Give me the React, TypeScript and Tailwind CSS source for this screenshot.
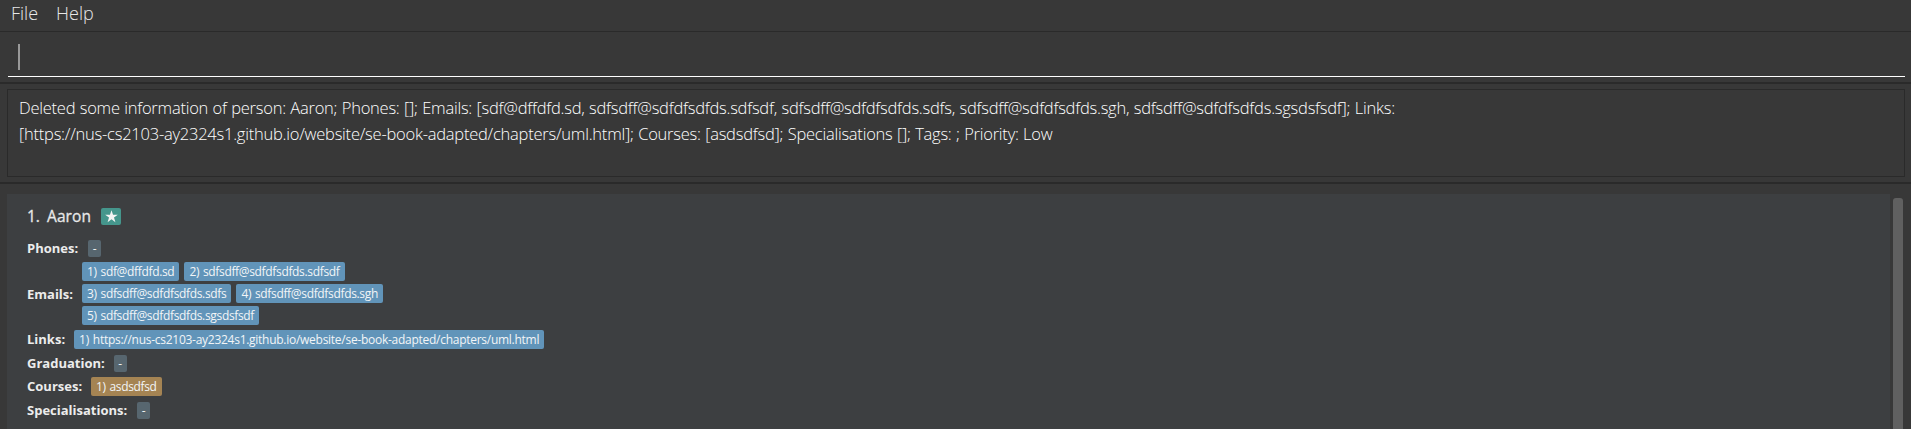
import type { ReactNode } from "react";

const emailRows = [
  ["1) sdf@dffdfd.sd", "2) sdfsdff@sdfdfsdfds.sdfsdf"],
  ["3) sdfsdff@sdfdfsdfds.sdfs", "4) sdfsdff@sdfdfsdfds.sgh"],
  ["5) sdfsdff@sdfdfsdfds.sgsdsfsdf"],
];

function Label({ children }: { children: ReactNode }) {
  return <span className="text-[13px] leading-[17px] font-bold text-[#ececec]">{children}</span>;
}

function Tag({ children, className }: { children: ReactNode; className: string }) {
  return (
    <span
      className={`h-[19px] rounded-xs px-[5px] text-[12px] leading-[19px] [word-spacing:1px] whitespace-nowrap text-[#f2f5f7] ${className}`}
    >
      {children}
    </span>
  );
}

function Empty() {
  return (
    <span className="h-[17px] w-[13px] rounded-xs bg-[#57666f] text-center text-[12px] leading-[17px] text-[#f0f0f0]">
      -
    </span>
  );
}

export default function App() {
  return (
    <div className="flex h-[429px] w-full flex-col overflow-hidden bg-[#383838] font-['Open_Sans',sans-serif]">
      <nav className="flex h-8 shrink-0 gap-[18px] border-b border-[#2a2a2a] pl-[11px] text-[18px] leading-[27px] font-light text-[#e8e8e8]">
        <span>File</span>
        <span>Help</span>
      </nav>

      <div className="h-[50px] shrink-0 pt-3 pr-1.5 pl-2">
        <div className="h-[33px] border-b border-white pl-2.5">
          <div className="h-[26px] w-0.5 bg-[#999999]" />
        </div>
      </div>

      <section className="h-[102px] shrink-0 border-y-2 border-[#2a2a2a] pt-[5px] pr-1.5 pl-[7px]">
        <div className="h-[88px] border border-[#2a2a2a] pt-[5px] pl-[11px] text-[16.5px] leading-[26px] font-light tracking-[-0.237px] [word-spacing:0.4px] whitespace-nowrap text-white">
          Deleted some information of person: Aaron; Phones: []; Emails: [sdf@dffdfd.sd,
          sdfsdff@sdfdfsdfds.sdfsdf, sdfsdff@sdfdfsdfds.sdfs, sdfsdff@sdfdfsdfds.sgh,
          sdfsdff@sdfdfsdfds.sgsdsfsdf]; Links:
          <br />
          [https://nus-cs2103-ay2324s1.github.io/website/se-book-adapted/chapters/uml.html]; Courses:
          [asdsdfsd]; Specialisations []; Tags: ; Priority: Low
        </div>
      </section>

      <main className="flex min-h-0 flex-1 pt-2.5 pr-2 pl-[7px]">
        <article className="flex-1 bg-[#3d3f41] pt-3.5 pl-5">
          <header className="mb-[15px] flex h-[17px] items-center text-[15.5px] leading-[17px] text-[#e8e8e8] [-webkit-text-stroke:0.3px_#e8e8e8]">
            <span className="w-5">1.</span>
            <span className="w-[54px] tracking-[0.1px]">Aaron</span>
            <span className="flex h-[17px] w-5 items-center justify-center rounded-xs bg-[#45968c]">
              <svg viewBox="0 0 12 12" className="size-[13px]" fill="#f4f4f4">
                <path d="M6 .2 7.4 4.4H11.8L8.3 7 9.6 11.2 6 8.6 2.4 11.2 3.7 7 .2 4.4H4.6Z" />
              </svg>
            </span>
          </header>

          <div className="mb-[5px] flex h-[17px] items-center gap-2.5">
            <Label>Phones:</Label>
            <Empty />
          </div>

          <div className="mb-[5px] flex h-[63px] items-center gap-[9px]">
            <div className="flex pt-px">
              <Label>Emails:</Label>
            </div>
            <div className="flex flex-col gap-[3px]">
              {emailRows.map((row) => (
                <div key={row[0]} className="flex gap-[5px]">
                  {row.map((email) => (
                    <Tag key={email} className="bg-[#6194b9] tracking-[-0.335px]">
                      {email}
                    </Tag>
                  ))}
                </div>
              ))}
            </div>
          </div>

          <div className="mb-1.5 flex h-[19px] items-center gap-[9px]">
            <Label>Links:</Label>
            <Tag className="bg-[#6194b9] tracking-[-0.27px]">
              1) https://nus-cs2103-ay2324s1.github.io/website/se-book-adapted/chapters/uml.html
            </Tag>
          </div>

          <div className="mb-[5px] flex h-[17px] items-center gap-[9px]">
            <Label>Graduation:</Label>
            <Empty />
          </div>

          <div className="mb-1.5 flex h-[19px] items-center gap-[9px]">
            <Label>Courses:</Label>
            <Tag className="bg-[#a58453] tracking-[-0.36px]">1) asdsdfsd</Tag>
          </div>

          <div className="flex h-[17px] items-center gap-2.5">
            <Label>Specialisations:</Label>
            <Empty />
          </div>
        </article>
        <div className="mt-1 ml-[3px] w-2.5 rounded-t-[3px] bg-[#606060]" />
      </main>
    </div>
  );
}
